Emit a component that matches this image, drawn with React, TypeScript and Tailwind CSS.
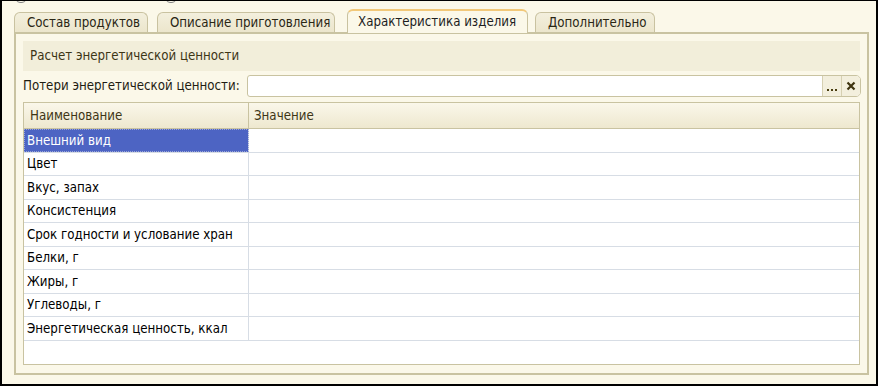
import React from "react";

const rows = [
  "Внешний вид",
  "Цвет",
  "Вкус, запах",
  "Консистенция",
  "Срок годности и услование хран",
  "Белки, г",
  "Жиры, г",
  "Углеводы, г",
  "Энергетическая ценность, ккал",
];

const tall = [true, false, true, false, true, false, true, false, true];

function Tab({ label, active, cls }: { label: string; active?: boolean; cls: string }) {
  if (active) {
    return (
      <div
        className={`${cls} h-[24px] -mb-[1px] relative z-10 rounded-t-[6px] border border-b-0 border-[#C9C2A0] border-t-[#F2C879] border-t-2 bg-[#FBF8E9] flex items-center pl-[10px] text-[#1E1E1E]`}
      >
        {label}
      </div>
    );
  }
  return (
    <div
      className={`${cls} h-[20px] rounded-t-[6px] border border-b-0 border-[#C9C2A0] bg-gradient-to-b from-[#F3EFDD] to-[#ECE6CC] flex items-center pl-[12px] text-[#2A2614]`}
    >
      {label}
    </div>
  );
}

export default function App() {
  return (
    <div
      className="w-[878px] h-[386px] bg-[#FBF8E9] border-l-2 border-r-2 border-b-2 border-t border-black relative overflow-hidden text-[13.2px] leading-none"
      style={{ fontFamily: '"DejaVu Sans Condensed", "DejaVu Sans", Verdana, sans-serif' }}
    >
      <div className="absolute left-[14px] top-[-6px] w-[10px] h-[8px] rounded-full border border-[#888]" />
      <div className="absolute left-[164px] top-[-6px] w-[10px] h-[8px] rounded-full border border-[#888]" />

      <div className="pl-[12px] pr-[7px] pt-[8px]">
        <div className="flex items-end h-[23px]">
          <Tab label="Состав продуктов" cls="w-[134px]" />
          <Tab label="Описание приготовления" cls="w-[178px] ml-[9px]" />
          <Tab label="Характеристика изделия" cls="w-[181px] ml-[12px]" active />
          <Tab label="Дополнительно" cls="w-[120px] ml-[7px]" />
        </div>

        <div className="h-[343px] border-2 border-[#C9C3A1] bg-[#FBF8E9] px-[7px] pt-[7px] flex flex-col">
          <div className="h-[30px] bg-[#F2EEDA] flex items-center pl-[7px] text-[#3D3516]">
            Расчет энергетической ценности
          </div>

          <div className="flex items-center mt-[4px] h-[22px]">
            <div className="w-[223px] text-[#1F1D12] whitespace-nowrap">Потери энергетической ценности:</div>
            <div className="flex-1 h-[22px] -mr-[1px] ml-px flex border border-[#C9C3A1] rounded-r-[5px] rounded-l-[3px] bg-white overflow-hidden">
              <div className="flex-1" />
              <div className="w-[19px] bg-[#F3EFDD] border-l border-[#D6D0B2] flex items-end justify-center gap-[2px] pb-[5px]">
                <div className="w-[2px] h-[2px] bg-[#4A3E10]" />
                <div className="w-[2px] h-[2px] bg-[#4A3E10]" />
                <div className="w-[2px] h-[2px] bg-[#4A3E10]" />
              </div>
              <div className="w-[19px] bg-[#F3EFDD] border-l border-[#D6D0B2] flex items-center justify-center">
                <svg width="10" height="10" viewBox="0 0 10 10">
                  <path d="M1.5 1.5 L8.5 8.5 M8.5 1.5 L1.5 8.5" stroke="#3F3410" strokeWidth="2.2" />
                </svg>
              </div>
            </div>
          </div>

          <div className="mt-[5px] h-[263px] border border-[#C9C3A1] bg-white flex flex-col">
            <div className="h-[26px] flex bg-gradient-to-b from-[#FAF7EA] to-[#EEE8CF] border-b border-[#C9C3A1] text-[#3D3516]">
              <div className="w-[225px] border-r border-[#C9C3A1] flex items-center pl-[6px]">Наименование</div>
              <div className="flex-1 flex items-center pl-[5px]">Значение</div>
            </div>
            {rows.map((r, i) => (
              <div
                key={r}
                className={`${tall[i] ? "h-[24px]" : "h-[23px]"} flex border-b border-[#D7DDE5]`}
              >
                {i === 0 ? (
                  <div className="w-[225px] border-r border-[#D7DDE5] flex items-center pl-[3px] bg-[#4D64C3] text-white outline-1 outline-dotted outline-[#9AA6D9] -outline-offset-1">
                    {r}
                  </div>
                ) : (
                  <div className="w-[225px] border-r border-[#D7DDE5] flex items-center pl-[3px] text-black whitespace-nowrap">
                    {r}
                  </div>
                )}
                <div className="flex-1" />
              </div>
            ))}
          </div>
        </div>
      </div>
    </div>
  );
}
